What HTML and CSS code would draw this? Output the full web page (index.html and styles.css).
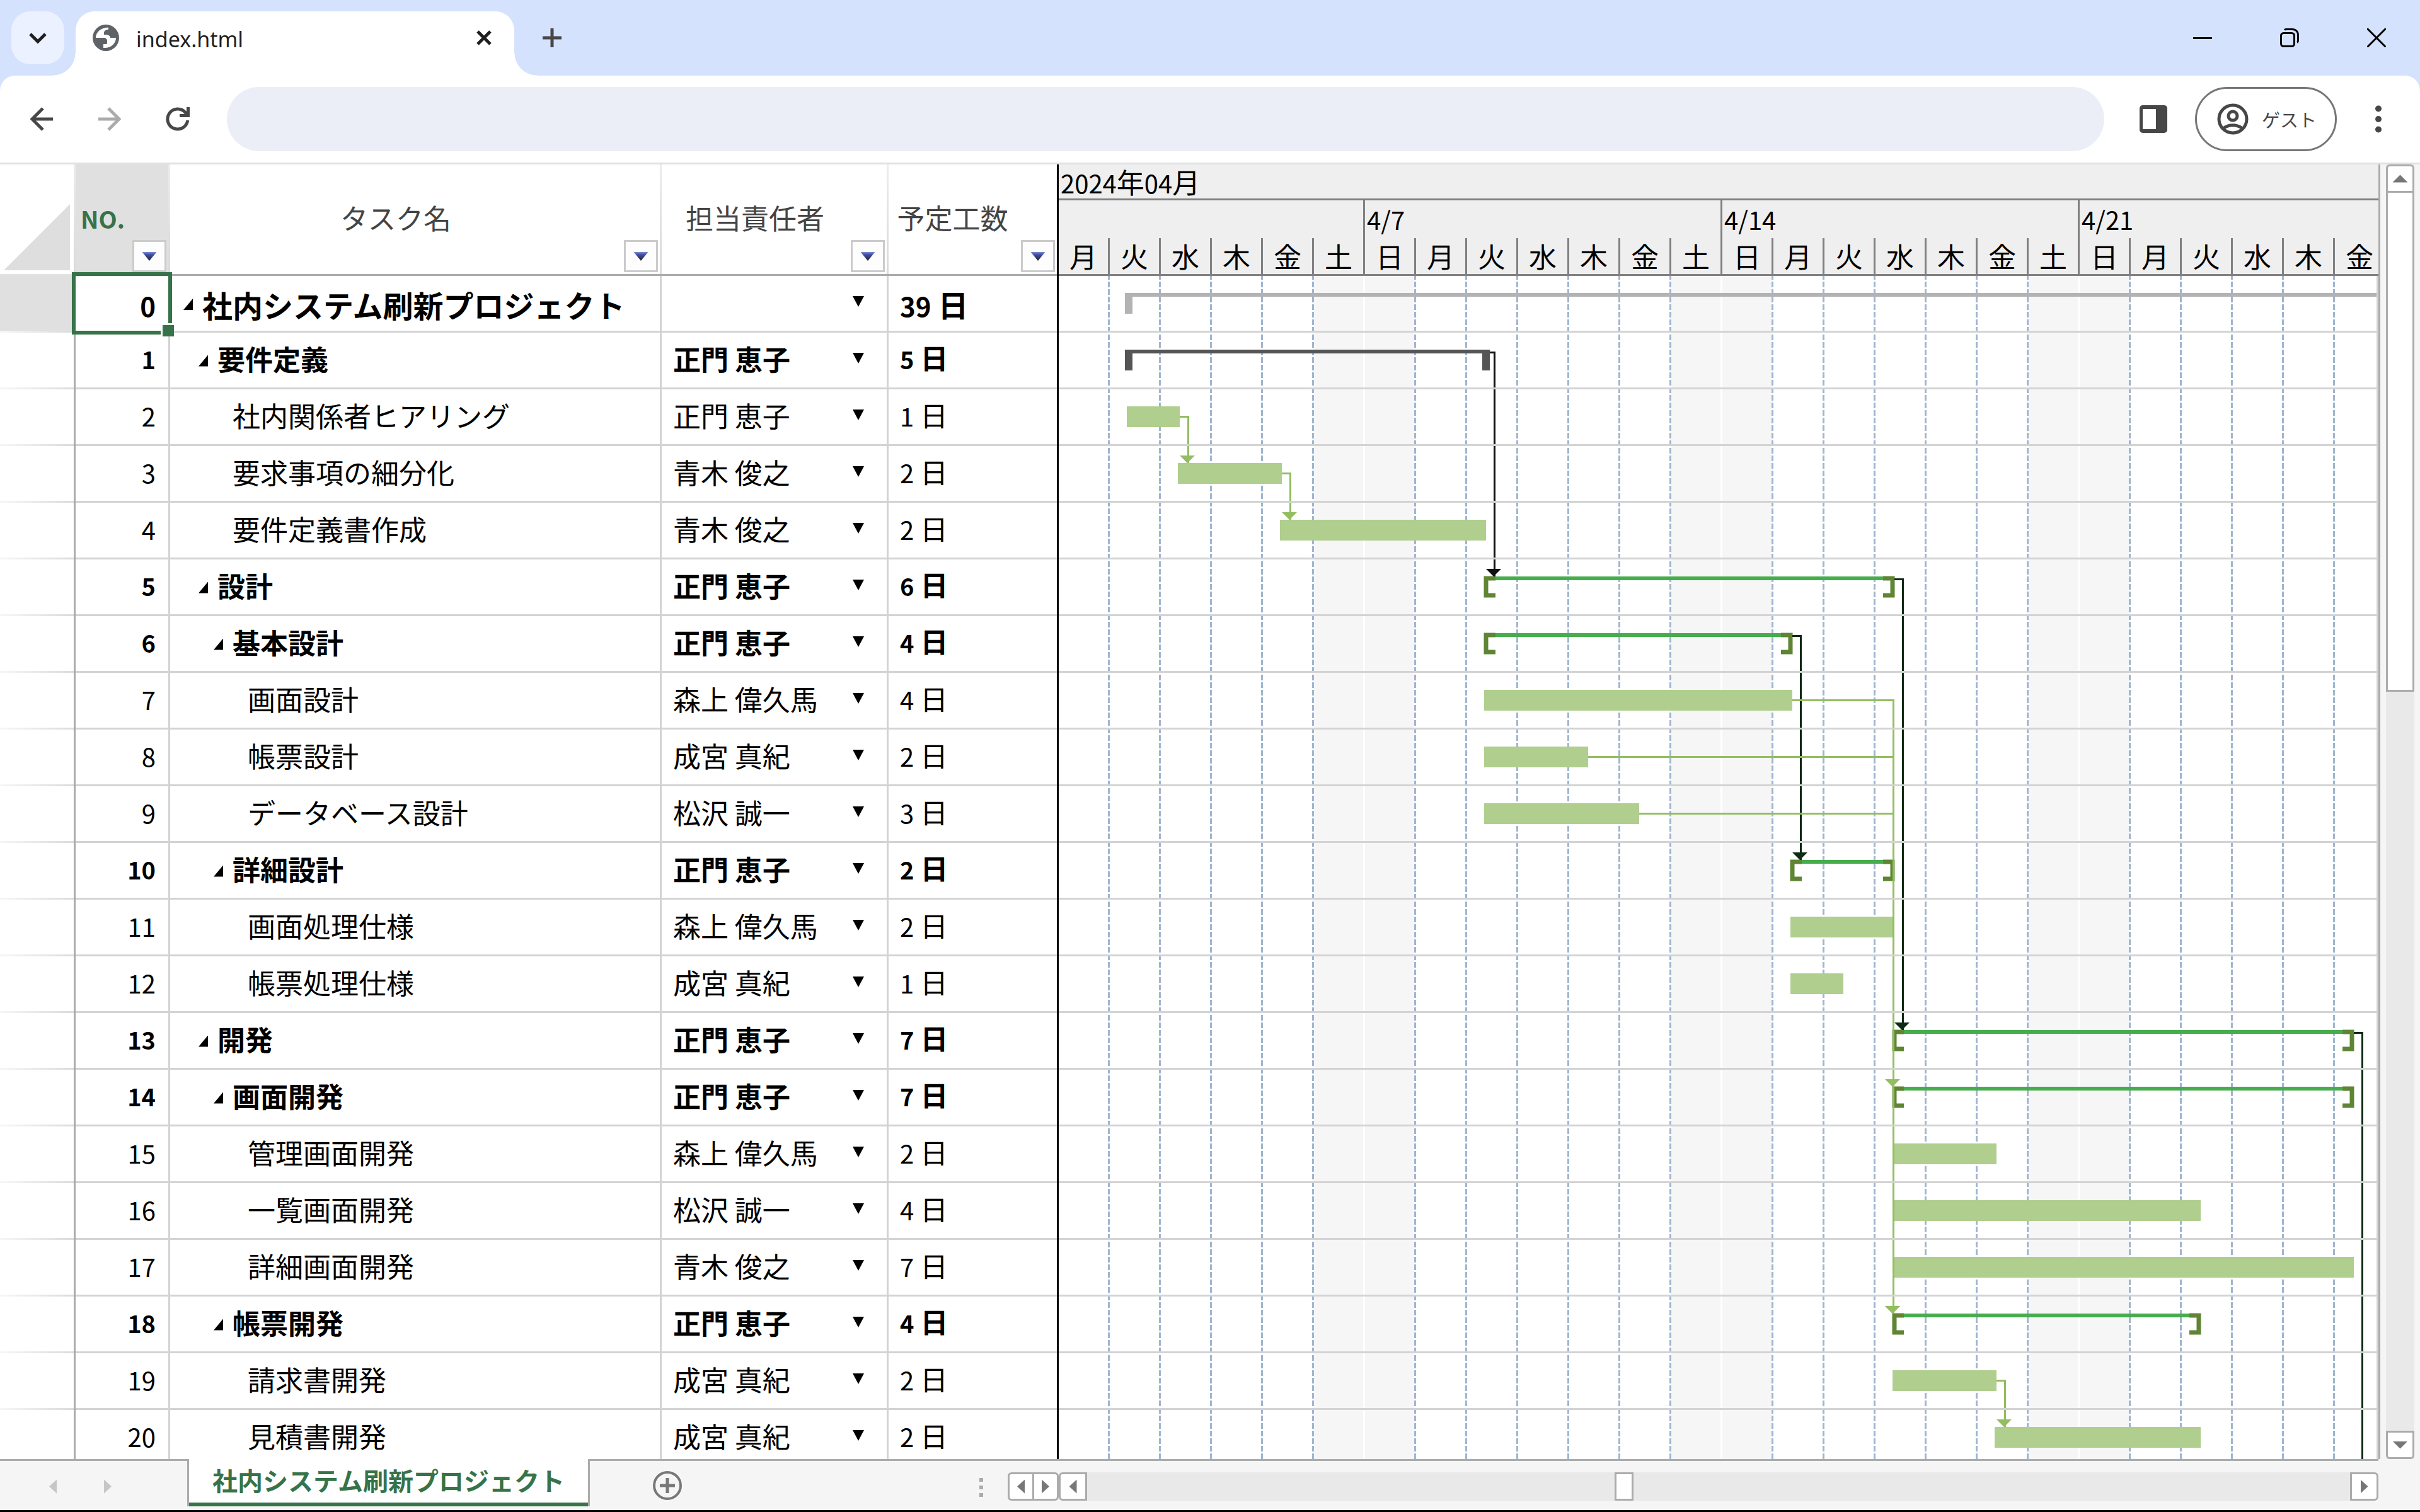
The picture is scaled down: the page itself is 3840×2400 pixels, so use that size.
FILE: index.html
```html
<!DOCTYPE html>
<html lang="ja">
<head>
  <meta charset="UTF-8">
  <title>index.html</title>
  <meta name="viewport" content="width=device-width, initial-scale=1.0">
  <link rel="stylesheet" href="styles.css">
</head>
<body>

  <header class="tab-strip">
    <button class="tab-search" aria-label="タブを検索">
      <svg width="42" height="42" viewBox="0 0 42 42"><path d="M9 15l12 12 12-12" fill="none" stroke="#1f1f1f" stroke-width="5"/></svg>
    </button>
    <div class="tab">
      <svg width="42" height="42" viewBox="0 0 42 42">
        <circle cx="21" cy="21" r="21" fill="#5f6368"/>
        <path d="M5 21C5 12 13 5 25 4.500V8C21 8 18 10 18 13V16C24 16 28 17 28 21H37C37 30 29 38 17 37V31H21C23 31 23 30 23 28V26C23 23 21 21 17 21Z" fill="#fff"/>
      </svg>
      <span class="tab-title">index.html</span>
      <button class="icon-btn tab-close" aria-label="閉じる">
        <svg width="30" height="30" viewBox="0 0 30 30"><path d="M5 5l20 20M25 5L5 25" stroke="#1f1f1f" stroke-width="5"/></svg>
      </button>
    </div>
    <button class="icon-btn tab-new" aria-label="新しいタブ">
      <svg width="30" height="30" viewBox="0 0 30 30"><path d="M15 0v30M0 15h30" stroke="#474747" stroke-width="5"/></svg>
    </button>
    <div class="window-controls">
      <button class="icon-btn" aria-label="最小化">
        <svg width="30" height="30" viewBox="0 0 30 30"><path d="M0 15.500h30" stroke="#000" stroke-width="3"/></svg>
      </button>
      <button class="icon-btn" aria-label="元に戻す">
        <svg width="30" height="30" viewBox="0 0 30 30" fill="none" stroke="#000" stroke-width="3">
          <rect x="1.500" y="7.500" width="21" height="21" rx="4"/>
          <path d="M7 2.500C8 1.500 9 1.500 10 1.500H19C25 1.500 28.500 5 28.500 11V19C28.500 21 28 22 27 22.500"/>
        </svg>
      </button>
      <button class="icon-btn" aria-label="ウィンドウを閉じる">
        <svg width="30" height="30" viewBox="0 0 30 30"><path d="M1 1l28 28M29 1L1 29" stroke="#000" stroke-width="3" stroke-linecap="round"/></svg>
      </button>
    </div>
  </header>

  <nav class="toolbar">
    <button class="icon-btn" aria-label="戻る">
      <svg width="36" height="38" viewBox="0 0 36 38" fill="none" stroke="#474747" stroke-width="5"><path d="M36 19H4M20 2L3 19l17 17"/></svg>
    </button>
    <button class="icon-btn" aria-label="進む" disabled>
      <svg width="36" height="38" viewBox="0 0 36 38" fill="none" stroke="#ababab" stroke-width="5"><path d="M0 19h32M16 2l17 17-17 17"/></svg>
    </button>
    <button class="icon-btn" aria-label="再読み込み">
      <svg width="38" height="38" viewBox="0 0 38 38" fill="none" stroke="#474747" stroke-width="5"><path d="M34.800 21A16 16 0 1 1 31 8.500L35 13.500M35.500 0V13.500H22"/></svg>
    </button>
    <input class="omnibox" type="text" aria-label="アドレス">
    <button class="icon-btn side-panel" aria-label="サイドパネル">
      <svg width="44" height="44" viewBox="0 0 44 44"><rect width="44" height="44" rx="5" fill="#474747"/><rect x="5" y="6" width="21" height="32" fill="#fff"/></svg>
    </button>
    <button class="profile">
      <svg width="50" height="50" viewBox="0 0 50 50" fill="none" stroke="#474747" stroke-width="5">
        <circle cx="25" cy="25" r="22"/>
        <circle cx="25" cy="20" r="7"/>
        <path d="M10 40C18 33 32 33 40 40"/>
      </svg>
      <span>ゲスト</span>
    </button>
    <button class="icon-btn" aria-label="メニュー">
      <svg width="12" height="44" viewBox="0 0 12 44" fill="#474747"><circle cx="6" cy="5.500" r="5"/><circle cx="6" cy="22" r="5"/><circle cx="6" cy="38.500" r="5"/></svg>
    </button>
  </nav>

  <main class="workbook">
    <div class="grid">
      <table class="tasks">
        <colgroup>
          <col class="col-head"><col class="col-no"><col class="col-task"><col class="col-owner"><col class="col-days">
        </colgroup>
        <thead>
          <tr>
            <th class="corner"></th>
            <th class="active">NO.<button class="filter" aria-label="NO. フィルター"></button></th>
            <th>タスク名<button class="filter" aria-label="タスク名 フィルター"></button></th>
            <th>担当責任者<button class="filter" aria-label="担当責任者 フィルター"></button></th>
            <th>予定工数<button class="filter" aria-label="予定工数 フィルター"></button></th>
          </tr>
        </thead>
        <tbody id="rows"></tbody>
      </table>
    </div>

    <div class="gantt">
      <div class="timeline">
        <div class="month"><span class="num">2024</span>年<span class="num">04</span>月</div>
        <div class="weeks" id="weeks"></div>
        <div class="weekdays" id="weekdays"></div>
      </div>
      <svg class="chart" id="chart">
        <defs>
          <pattern id="weekLines" width="567" height="12" patternUnits="userSpaceOnUse">
            <rect x="405" width="78" height="12" fill="#f6f6f6"/>
            <rect x="486" width="78" height="12" fill="#f6f6f6"/>
            <path d="M79.500 0v12M160.500 0v12M241.500 0v12M322.500 0v12M403.500 0v12M565.500 0v12" stroke="#a0b6d0" stroke-width="3" stroke-dasharray="6 3 3 0"/>
          </pattern>
          <pattern id="rowLines" width="90" height="90" patternUnits="userSpaceOnUse">
            <rect y="87" width="90" height="3" fill="#d3d3d3"/>
          </pattern>
        </defs>
        <rect width="100%" height="100%" fill="url(#weekLines)"/>
        <g id="bars"></g>
        <g id="links"></g>
        <rect width="100%" height="100%" fill="url(#rowLines)"/>
      </svg>
    </div>

    <div class="vscroll">
      <button class="scroll-btn up" aria-label="上へ"></button>
      <div class="vthumb"></div>
      <button class="scroll-btn down" aria-label="下へ"></button>
    </div>
  </main>

  <footer class="sheet-bar">
    <div class="sheet-nav">
      <button class="nav-btn left" aria-label="前のシート" disabled></button>
      <button class="nav-btn right" aria-label="次のシート" disabled></button>
      <button class="sheet-tab">社内システム刷新プロジェクト</button>
      <button class="icon-btn sheet-add" aria-label="シートを追加">
        <svg width="46" height="46" viewBox="0 0 46 46" fill="none" stroke="#777"><circle cx="23" cy="23" r="21" stroke-width="4"/><path d="M23 11v24M11 23h24" stroke-width="5"/></svg>
      </button>
      <div class="grip"><i></i><i></i><i></i></div>
    </div>
    <div class="hscroll">
      <button class="scroll-btn left" aria-label="表を左へ"></button>
      <button class="scroll-btn right" aria-label="表を右へ"></button>
      <button class="scroll-btn left" aria-label="左へ"></button>
      <div class="htrack"><div class="hthumb"></div></div>
      <button class="scroll-btn right" aria-label="右へ"></button>
    </div>
  </footer>

  <script src="gantt.js"></script>
</body>
</html>
```

FILE: gantt.js
```js
// level, タスク名, 担当責任者, 工数, 種類, 開始x, 終了x
const tasks = [
  [0, '社内システム刷新プロジェクト', '', 39, 'project', 105, 3200],
  [1, '要件定義', '正門 恵子', 5, 'done', 105, 684],
  [2, '社内関係者ヒアリング', '正門 恵子', 1, 'task', 108, 192],
  [2, '要求事項の細分化', '青木 俊之', 2, 'task', 189, 354],
  [2, '要件定義書作成', '青木 俊之', 2, 'task', 351, 678],
  [1, '設計', '正門 恵子', 6, 'summary', 675, 1326],
  [2, '基本設計', '正門 恵子', 4, 'summary', 675, 1164],
  [3, '画面設計', '森上 偉久馬', 4, 'task', 675, 1164],
  [3, '帳票設計', '成宮 真紀', 2, 'task', 675, 840],
  [3, 'データベース設計', '松沢 誠一', 3, 'task', 675, 921],
  [2, '詳細設計', '正門 恵子', 2, 'summary', 1161, 1326],
  [3, '画面処理仕様', '森上 偉久馬', 2, 'task', 1161, 1326],
  [3, '帳票処理仕様', '成宮 真紀', 1, 'task', 1161, 1245],
  [1, '開発', '正門 恵子', 7, 'summary', 1323, 2055],
  [2, '画面開発', '正門 恵子', 7, 'summary', 1323, 2055],
  [3, '管理画面開発', '森上 偉久馬', 2, 'task', 1323, 1488],
  [3, '一覧画面開発', '松沢 誠一', 4, 'task', 1323, 1812],
  [3, '詳細画面開発', '青木 俊之', 7, 'task', 1323, 2055],
  [2, '帳票開発', '正門 恵子', 4, 'summary', 1323, 1812],
  [3, '請求書開発', '成宮 真紀', 2, 'task', 1323, 1488],
  [3, '見積書開発', '成宮 真紀', 2, 'task', 1485, 1812]
];

// 先行タスク, 後続タスク, 縦線x, 色
const links = [
  [1, 5, 690, '#111111'],
  [5, 13, 1338, '#0c2a14'],
  [6, 10, 1176, '#0c2a14'],
  [13, 30, 2067, '#0c2a14'],
  [2, 3, 204, '#93bd60'],
  [3, 4, 366, '#93bd60'],
  [7, 14, 1323, '#93bd60'],
  [8, 18, 1323, '#93bd60'],
  [9, 18, 1323, '#93bd60'],
  [19, 20, 1500, '#93bd60']
];

const ROW = 90;
const TOP = 27;

const rect = (x, y, w, h, color) => `<rect x="${x}" y="${y}" width="${w}" height="${h}" fill="${color}"/>`;

function drawBar([, , , , type, x1, x2], row) {
  const y = row * ROW + TOP;
  if (type === 'task') {
    return rect(x1, y, x2 - x1, 33, '#b0ce8e');
  }
  if (type === 'summary') {
    return rect(x1, y, x2 - x1, 6, '#46ac4c') +
      `<path d="M${x1 + 18} ${y + 3}h-15v27h15M${x2 - 18} ${y + 3}h15v27h-15" fill="none" stroke="#5f8534" stroke-width="7"/>`;
  }
  const color = type === 'done' ? '#555555' : '#b3b3b3';
  return rect(x1, y, x2 - x1, 6, color) + rect(x1, y, 12, 33, color) + rect(x2 - 12, y, 12, 33, color);
}

function drawLink([from, to, x, color]) {
  const y1 = from * ROW + (tasks[from][4] === 'task' ? 42 : 30);
  const y2 = to * ROW + TOP;
  const start = tasks[from][6];
  return rect(start, y1, x + 3 - start, 3, color) + rect(x, y1, 3, y2 - y1, color) +
    `<path d="M${x - 12} ${y2 - 12}h24l-12 12z" fill="${color}"/>`;
}

document.getElementById('rows').innerHTML = tasks.map(([level, name, owner, days, type], i) => {
  const toggle = type === 'task' ? '' : '<button class="toggle" aria-label="折りたたむ"></button>';
  return `<tr class="level-${level} ${type}">
    <td class="row-head"></td>
    <td class="no"><span class="num">${i}</span></td>
    <td class="name">${toggle}${name}</td>
    <td class="owner"><div>${owner}<button class="drop" aria-label="担当責任者を選択"></button></div></td>
    <td class="days"><span class="num">${days}</span> 日</td>
  </tr>`;
}).join('');

document.getElementById('weeks').innerHTML =
  ['', '4/7', '4/14', '4/21'].map(w => `<div>${w}</div>`).join('');

document.getElementById('weekdays').innerHTML =
  [...'月火水木金土日月火水木金土日月火水木金土日月火水木金'].map(d => `<div>${d}</div>`).join('');

document.getElementById('bars').innerHTML = tasks.map(drawBar).join('');
document.getElementById('links').innerHTML = links.map(drawLink).join('');
```

FILE: styles.css
```css
* {
  margin: 0;
  padding: 0;
  box-sizing: border-box;
}

html, body {
  height: 100%;
}

body {
  display: flex;
  flex-direction: column;
  overflow: hidden;
  background: #f5f5f5;
  border-bottom: 3px solid #000;
  font-family: "Noto Sans CJK JP", sans-serif;
  font-size: 44px;
  color: #000;
}

button {
  font: inherit;
  color: inherit;
  background: none;
  border: none;
}

svg {
  display: block;
}

.icon-btn {
  display: flex;
  align-items: center;
  justify-content: center;
  flex: none;
  width: 84px;
  height: 84px;
}

.num {
  font-size: 40px;
}

/* ---- browser tabs ---- */

/* runs 24px under the toolbar so its rounded corners show the strip */
.tab-strip {
  display: flex;
  flex: none;
  height: 144px;
  margin-bottom: -24px;
  padding: 18px 0 0 18px;
  background: #d5e2fd;
}

.tab-search {
  display: flex;
  align-items: center;
  justify-content: center;
  width: 84px;
  height: 84px;
  border-radius: 30px;
  background: #ebf1fe;
}

.tab {
  position: relative;
  display: flex;
  align-items: center;
  width: 696px;
  height: 102px;
  margin-left: 18px;
  padding: 0 6px 18px 27px;
  border-radius: 30px 30px 0 0;
  background: #fff;
}

.tab::before,
.tab::after {
  content: "";
  position: absolute;
  bottom: 0;
  width: 36px;
  height: 36px;
}

.tab::before {
  right: 100%;
  background: radial-gradient(circle at 0 0, transparent 35px, #fff 36px);
}

.tab::after {
  left: 100%;
  background: radial-gradient(circle at 100% 0, transparent 35px, #fff 36px);
}

.tab-title {
  flex: 1;
  margin-left: 27px;
  padding-top: 3px;
  font-family: "Noto Sans", sans-serif;
  font-size: 34px;
  color: #1f1f1f;
}

.tab-new {
  margin-left: 18px;
}

.window-controls {
  display: flex;
  gap: 54px;
  margin-left: auto;
  padding-right: 27px;
}

/* ---- toolbar ---- */

.toolbar {
  display: flex;
  flex: none;
  align-items: center;
  gap: 24px;
  height: 141px;
  padding: 0 24px;
  border-bottom: 3px solid #dfe2df;
  border-radius: 24px 24px 0 0;
  background: #fff;
  z-index: 1;
}

.omnibox {
  flex: 1;
  height: 102px;
  margin-left: 12px;
  padding: 0 48px;
  border: none;
  border-radius: 51px;
  background: #ebeef7;
  font: inherit;
}

.side-panel {
  margin-left: 12px;
}

.profile {
  display: flex;
  align-items: center;
  gap: 21px;
  width: 225px;
  height: 102px;
  padding-left: 32px;
  border: 3px solid #767676;
  border-radius: 51px;
  font-size: 29px;
  color: #474747;
}

/* ---- workbook ---- */

.workbook {
  display: flex;
  flex: 1;
  min-height: 0;
}

.grid {
  flex: none;
  width: 1680px;
  overflow: hidden;
  border-right: 3px solid #000;
  background: #fff;
}

.tasks {
  width: 100%;
  table-layout: fixed;
  border-collapse: separate;
  border-spacing: 0;
}

.col-head { width: 120px; }
.col-no { width: 150px; }
.col-task { width: 780px; }
.col-owner { width: 360px; }

.tasks th {
  position: relative;
  height: 177px;
  padding: 0 64px 6px 0;
  border-bottom: 3px solid #ababab;
  background: linear-gradient(#ececec, #d6dcd5) right / 3px 100% no-repeat;
  font-weight: 400;
  white-space: nowrap;
  color: #444;
}

.tasks th:last-child {
  background: none;
}

.tasks th.corner {
  border-bottom-color: #e0e3df;
}

.corner::after {
  content: "";
  position: absolute;
  right: 9px;
  bottom: 6px;
  width: 105px;
  height: 105px;
  background: #dedede;
  clip-path: polygon(100% 0, 100% 100%, 0 100%);
}

.tasks th.active {
  padding-bottom: 3px;
  background-color: #e0e0e0;
  font-size: 38px;
  font-weight: 700;
  color: #377348;
}

.filter {
  position: absolute;
  right: 6px;
  bottom: 3px;
  width: 54px;
  height: 51px;
  border: 3px solid #cbcbcb;
  background: #fdfdfd;
}

.filter::after {
  content: "";
  display: block;
  width: 23px;
  height: 14px;
  margin: 1px auto 0;
  background: linear-gradient(#7f8ed6, #3f4fa5 30%, #222);
  clip-path: polygon(0 0, 100% 0, 50% 100%);
}

.tasks th:last-child .filter {
  right: 3px;
}

.tasks td {
  height: 90px;
  padding: 0 0 6px 18px;
  border-right: 3px solid #d3d3d3;
  border-bottom: 3px solid #d3d3d3;
  line-height: 64px;
  white-space: nowrap;
}

.tasks td:last-child {
  border-right: none;
}

.tasks .row-head {
  border-right-color: #ababab;
  border-bottom: none;
  background: linear-gradient(to right, #f6f6f6, #d9ddd8) bottom / 100% 3px no-repeat;
}

.project .row-head {
  background-color: #e0e0e0;
}

.tasks .no {
  padding-right: 20px;
  text-align: right;
}

.tasks .name { padding-left: 21px; }
.tasks .level-1 .name { padding-left: 45px; }
.tasks .level-2 .name { padding-left: 69px; }
.tasks .level-3 .name { padding-left: 93px; }
.tasks .level-2.task .name { padding-left: 99px; }
.tasks .level-3.task .name { padding-left: 123px; }

.project,
.done,
.summary {
  font-weight: 700;
}

.tasks .project .no,
.tasks .project .name,
.tasks .project .days {
  padding-top: 3px;
  padding-bottom: 0;
  font-size: 48px;
}

.done .num,
.summary .num {
  font-size: 38px;
}

.project .num {
  font-size: 42px;
}

.toggle {
  width: 15px;
  height: 18px;
  margin-right: 15px;
  background: #000;
  clip-path: polygon(100% 0, 100% 100%, 0 100%);
  vertical-align: 6px;
}

.project .toggle {
  vertical-align: 12px;
}

.owner div {
  display: flex;
  align-items: center;
  justify-content: space-between;
  min-height: 64px;
  padding-right: 36px;
}

.drop {
  width: 18px;
  height: 17px;
  margin-left: auto;
  background: #000;
  clip-path: polygon(0 0, 100% 0, 50% 100%);
}

/* selected cell */
.project .no {
  position: relative;
}

.project .no::before {
  content: "";
  position: absolute;
  inset: -6px;
  border: 6px solid #377348;
  z-index: 1;
}

.project .no::after {
  content: "";
  position: absolute;
  right: -9px;
  bottom: -9px;
  width: 18px;
  height: 18px;
  border-top: 3px solid #fff;
  border-left: 3px solid #fff;
  background: #377348;
  z-index: 2;
}

/* ---- gantt ---- */

.gantt {
  display: flex;
  flex: 1;
  flex-direction: column;
  min-width: 0;
  border-right: 3px solid #ababab;
  background: #fff;
}

.timeline {
  flex: none;
  overflow: hidden;
  border-bottom: 3px solid #808080;
  background: #efefef;
}

.month {
  height: 57px;
  padding-left: 3px;
  border-bottom: 3px solid #808080;
  line-height: 54px;
  white-space: nowrap;
}

.weeks,
.weekdays {
  display: flex;
}

.weeks div {
  flex: none;
  width: 567px;
  height: 60px;
  padding-left: 3px;
  border-right: 3px solid #808080;
  font-size: 40px;
  line-height: 60px;
}

.weeks div:first-child {
  width: 486px;
}

.weekdays div {
  flex: none;
  width: 81px;
  height: 57px;
  border-right: 3px solid #808080;
  line-height: 57px;
  text-align: center;
}

.weekdays div:last-child {
  border-right-color: transparent;
}

.chart {
  flex: 1;
  width: 100%;
  min-height: 0;
  border-right: 3px solid #d3d3d3;
}

/* ---- scroll bars ---- */

.scroll-btn {
  display: flex;
  flex: none;
  align-items: center;
  justify-content: center;
  width: 45px;
  height: 45px;
  border: 3px solid #ababab;
  background: #fff;
}

.scroll-btn::after,
.nav-btn::after {
  content: "";
  background: #777;
}

.up::after,
.down::after {
  width: 24px;
  height: 12px;
}

.left::after,
.right::after {
  width: 12px;
  height: 22px;
}

.up::after { clip-path: polygon(50% 0, 100% 100%, 0 100%); }
.down::after { clip-path: polygon(0 0, 100% 0, 50% 100%); }
.left::after { clip-path: polygon(100% 0, 100% 100%, 0 50%); }
.right::after { clip-path: polygon(0 0, 100% 50%, 0 100%); }

.scroll-btn.up { border-radius: 6px 6px 0 0; }
.scroll-btn.down { border-radius: 0 0 6px 6px; margin-top: auto; }
.scroll-btn.left { border-radius: 6px 0 0 6px; }
.scroll-btn.right { border-radius: 0 6px 6px 0; }

.vscroll {
  display: flex;
  flex: none;
  flex-direction: column;
  width: 45px;
  margin: 0 9px;
  background: #e9e9e9;
}

.vthumb {
  height: 795px;
  margin-top: -3px;
  border: 3px solid #ababab;
  background: #fff;
}

.hscroll {
  display: flex;
  flex: 1;
  padding-top: 18px;
}

.hscroll .scroll-btn:first-child {
  width: 39px;
  border-right: none;
}

.hscroll .scroll-btn:nth-child(2) {
  width: 42px;
}

.htrack {
  flex: 1;
  background: #e9e9e9;
  height: 45px;
}

.hthumb {
  width: 30px;
  height: 45px;
  margin-left: 837px;
  border: 3px solid #ababab;
  background: #fff;
}

/* ---- sheet tabs ---- */

.sheet-bar {
  display: flex;
  flex: none;
  height: 81px;
  margin-right: 66px;
  border-top: 3px solid #ababab;
}

.sheet-nav {
  display: flex;
  flex: none;
  align-items: center;
  width: 1560px;
  margin-right: 39px;
  padding-left: 54px;
}

.nav-btn {
  display: flex;
  align-items: center;
  justify-content: center;
  width: 60px;
  height: 60px;
  margin-right: 27px;
  padding-top: 3px;
}

.nav-btn::after {
  background: #c6c6c6;
}

.sheet-tab {
  align-self: flex-start;
  width: 639px;
  height: 75px;
  margin: -3px 0 0 69px;
  padding-bottom: 9px;
  border: solid #ababab;
  border-width: 0 3px;
  box-shadow: inset 0 -6px #377348;
  background: #fff;
  font-size: 40px;
  font-weight: 700;
  line-height: 66px;
  color: #377348;
}

.sheet-add {
  margin-left: 81px;
}

.grip {
  display: flex;
  flex-direction: column;
  gap: 6px;
  margin-left: auto;
  padding-top: 6px;
}

.grip i {
  width: 6px;
  height: 6px;
  background: #ababab;
}
```
